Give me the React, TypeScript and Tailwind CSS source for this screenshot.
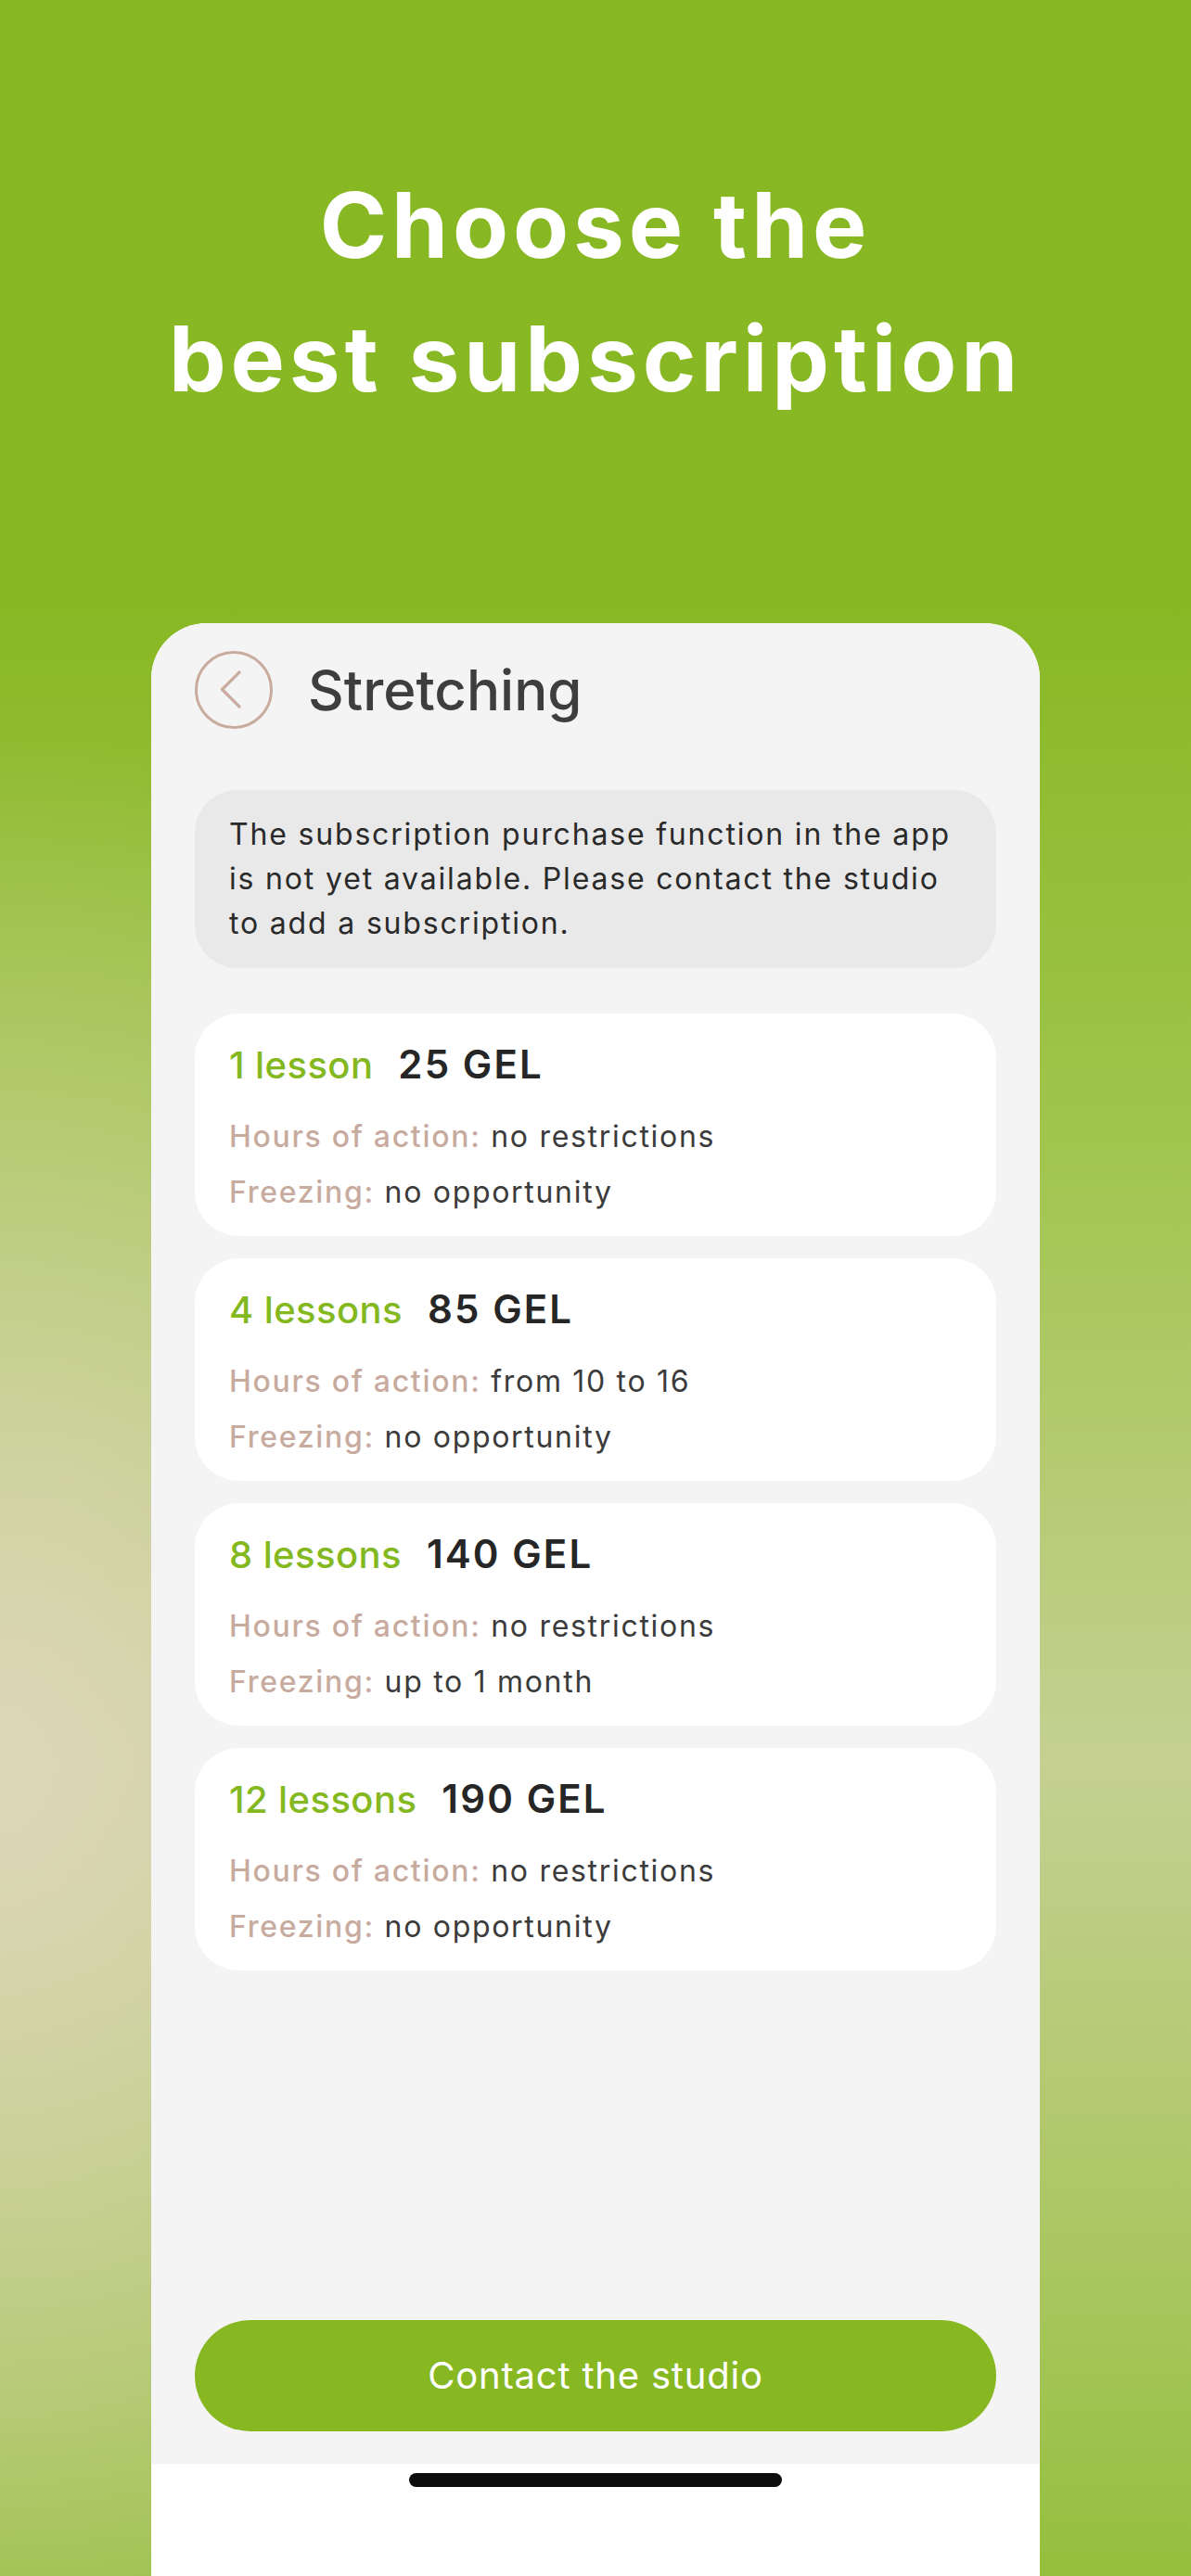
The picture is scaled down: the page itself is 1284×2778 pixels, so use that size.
import React from "react";

type Plan = {
  lessons: string;
  price: string;
  hours: string;
  freezing: string;
};

const plans: Plan[] = [
  { lessons: "1 lesson", price: "25 GEL", hours: "no restrictions", freezing: "no opportunity" },
  { lessons: "4 lessons", price: "85 GEL", hours: "from 10 to 16", freezing: "no opportunity" },
  { lessons: "8 lessons", price: "140 GEL", hours: "no restrictions", freezing: "up to 1 month" },
  { lessons: "12 lessons", price: "190 GEL", hours: "no restrictions", freezing: "no opportunity" },
];

function BackButton() {
  return (
    <svg width="84" height="84" viewBox="0 0 84 84" fill="none" className="shrink-0">
      <circle cx="42" cy="42" r="40.5" stroke="#c9ac9f" strokeWidth="3" />
      <path d="M48 23 L29.5 41.5 L48 60" stroke="#c9ac9f" strokeWidth="3.2" strokeLinecap="round" strokeLinejoin="round" />
    </svg>
  );
}

function PlanCard({ plan }: { plan: Plan }) {
  return (
    <div className="h-[240px] rounded-[48px] bg-white px-[37px] pt-[31px] pb-[18px]">
      <div className="flex items-baseline gap-[27px] text-[40px] leading-[48px]">
        <span className="font-medium tracking-[0.01em] text-[#84b81f]">{plan.lessons}</span>
        <span className="text-[42px] font-semibold tracking-[0.05em] text-[#262626]">{plan.price}</span>
      </div>
      <div className="mt-[23px] text-[32px] leading-[60px] tracking-[0.053em]">
        <div className="whitespace-nowrap">
          <span className="font-medium text-[#c8ab9f]">Hours of action:</span>{" "}
          <span className="text-[#3b3b3b]">{plan.hours}</span>
        </div>
        <div className="whitespace-nowrap">
          <span className="font-medium text-[#c8ab9f]">Freezing:</span>{" "}
          <span className="text-[#3b3b3b]">{plan.freezing}</span>
        </div>
      </div>
    </div>
  );
}

export default function App() {
  return (
    <div
      className="h-[2778px] w-[1284px] overflow-hidden bg-[radial-gradient(ellipse_1000px_1400px_at_0px_1910px,rgba(222,215,186,0.95)_0%,rgba(222,215,186,0.5)_35%,rgba(222,215,186,0)_80%),linear-gradient(180deg,#87b822_0px,#88b824_650px,#a2c54f_1250px,#c5d092_1900px,#a9c65f_2450px,#95bf3e_2778px)] pt-[171px]"
      style={{ fontFamily: "Inter, 'Liberation Sans', sans-serif" }}
    >
      <h1 className="text-center text-[98px] font-bold leading-[144px] tracking-[0.05em] text-white">
        Choose the
        <br />
        best subscription
      </h1>

      <div className="mx-auto mt-[213px] w-[958px] overflow-hidden rounded-t-[60px] bg-white">
        <div className="flex h-[1985px] flex-col bg-[#f4f4f4] px-[47px] pt-[30px] pb-[35px]">
          <div className="flex items-center gap-[38px]">
            <BackButton />
            <span className="text-[60px] font-medium leading-[70px] text-[#3e3e3e]">Stretching</span>
          </div>

          <div className="mt-[66px] rounded-[46px] bg-[#e9e9e9] px-[37px] py-[24px] text-[32px] leading-[48px] tracking-[0.057em] text-[#2a2a2a]">
            The subscription purchase function in the app is not yet available. Please contact the studio to add a subscription.
          </div>

          <div className="mt-[49px] flex flex-col gap-[24px]">
            {plans.map((p) => (
              <PlanCard key={p.lessons} plan={p} />
            ))}
          </div>

          <button className="mt-auto flex h-[120px] w-full items-center justify-center rounded-full bg-[#87b822] text-[40px] font-normal tracking-[0.02em] text-white">
            Contact the studio
          </button>
        </div>
        <div className="flex h-[121px] justify-center pt-[10px]">
          <div className="h-[15px] w-[402px] rounded-full bg-[#0d0d0d]" />
        </div>
      </div>
    </div>
  );
}
